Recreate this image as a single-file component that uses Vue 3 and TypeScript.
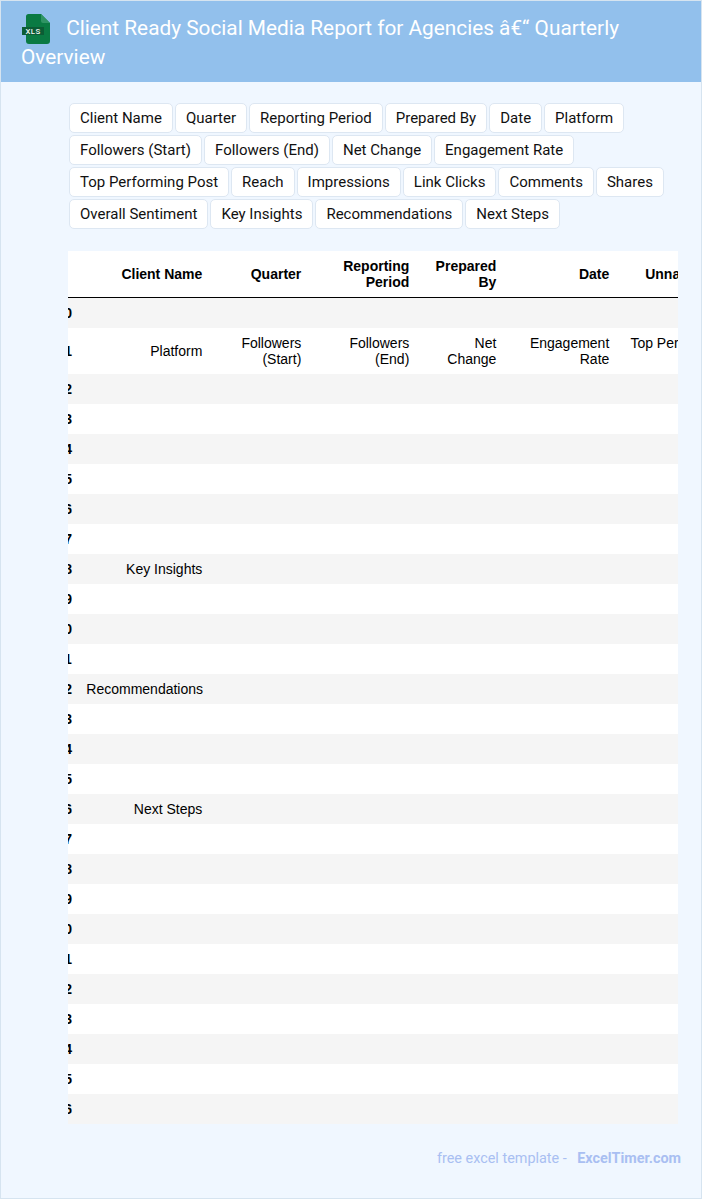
<script setup lang="ts">
const chips: string[] = [
  'Client Name', 'Quarter', 'Reporting Period', 'Prepared By', 'Date', 'Platform',
  'Followers (Start)', 'Followers (End)', 'Net Change', 'Engagement Rate',
  'Top Performing Post', 'Reach', 'Impressions', 'Link Clicks', 'Comments', 'Shares',
  'Overall Sentiment', 'Key Insights', 'Recommendations', 'Next Steps'
]
const headers: string[] = ['Client Name', 'Quarter', 'Reporting Period', 'Prepared By', 'Date', 'Unnamed: 6']
const filled: Record<number, string[]> = {
  1: ['Platform', 'Followers (Start)', 'Followers (End)', 'Net Change', 'Engagement Rate', 'Top Performing Post'],
  8: ['Key Insights'],
  12: ['Recommendations'],
  16: ['Next Steps']
}
const rows = Array.from({ length: 27 }, (_, i) => ({
  index: i,
  cells: headers.map((_h, c) => filled[i]?.[c] ?? '')
}))
</script>

<template>
  <div class="page">
    <header class="banner">
      <h1 class="title">
        <svg class="logo" width="29" height="30" viewBox="0 0 29 30" aria-hidden="true">
          <path d="M7.5 0H20L29 9V27a3 3 0 0 1-3 3H8a3 3 0 0 1-3-3V2.5A2.5 2.5 0 0 1 7.5 0Z" fill="#0a7a43" />
          <path d="M20 0L29 9H22a2 2 0 0 1-2-2Z" fill="#2f9464" />
          <rect x="1" y="13" width="22" height="8" fill="#0b5c35" />
          <text x="12" y="19.9" class="logo-text" text-anchor="middle">XLS</text>
        </svg>
        Client Ready Social Media Report for Agencies â€“ Quarterly Overview
      </h1>
    </header>

    <main class="content">
      <div class="chips">
        <span v-for="chip in chips" :key="chip" class="chip">{{ chip }}</span>
      </div>

      <div class="table-wrap">
        <table class="sheet">
          <colgroup>
            <col class="c-index" />
            <col class="c-client" />
            <col class="c-quarter" />
            <col class="c-period" />
            <col class="c-prepared" />
            <col class="c-date" />
            <col class="c-extra" />
          </colgroup>
          <thead>
            <tr>
              <th class="idx"></th>
              <th v-for="h in headers" :key="h">{{ h }}</th>
            </tr>
          </thead>
          <tbody>
            <tr v-for="row in rows" :key="row.index">
              <th class="idx">{{ row.index }}</th>
              <td v-for="(cell, c) in row.cells" :key="c">{{ cell }}</td>
            </tr>
          </tbody>
        </table>
      </div>

      <footer class="foot">
        <span>free excel template - </span>
        <strong class="brand">ExcelTimer.com</strong>
      </footer>
    </main>
  </div>
</template>

<style>
html, body { margin: 0; padding: 0; }
</style>

<style scoped>
.page {
  box-sizing: border-box;
  width: 702px;
  height: 1199px;
  border: 1px solid #d6e4f0;
  background: #f0f7ff;
  font-family: Roboto, sans-serif;
  overflow: hidden;
}
.banner {
  background: #92c0ec;
  height: 81px;
  box-sizing: border-box;
  padding: 13px 20px 0 20px;
}
.title {
  margin: 0;
  color: #fff;
  font-size: 20.8px;
  font-weight: 400;
  line-height: 28.6px;
}
.logo {
  display: inline-block;
  vertical-align: -1px;
  margin: -8px 11px -8px 0;
}
.logo-text {
  font-family: Roboto, sans-serif;
  font-size: 7.8px;
  font-weight: 500;
  letter-spacing: 0.4px;
  fill: #f2f7f4;
}
.content {
  padding: 21px 23px 0 67px;
}
.chips {
  display: flex;
  flex-wrap: wrap;
  gap: 2px;
  padding-left: 1px;
}
.chip {
  box-sizing: border-box;
  height: 30px;
  padding: 0 10px;
  line-height: 28px;
  font-size: 15px;
  color: #111;
  background: #fff;
  border: 1px solid #dde7f2;
  border-radius: 5px;
}
.table-wrap {
  margin-top: 22px;
  overflow: hidden;
  background: #fff;
}
.sheet {
  table-layout: fixed;
  width: 699px;
  margin-left: -31.7px;
  border-collapse: collapse;
  font-family: "Liberation Sans", sans-serif;
  font-size: 14px;
  line-height: 16px;
  color: #000;
}
.c-index { width: 40px; }
.c-client { width: 136px; }
.c-quarter { width: 99px; }
.c-period { width: 108px; }
.c-prepared { width: 87px; }
.c-date { width: 113px; }
.c-extra { width: 116px; }
th, td {
  padding: 7px 10px;
  text-align: right;
  vertical-align: middle;
  font-weight: 400;
}
th { font-weight: 700; }
th.idx { padding: 7px 4.4px 7px 0; }
thead tr { border-bottom: 1px solid #000; }
tbody tr:nth-child(odd) { background: #f5f5f5; }
tbody tr:nth-child(even) { background: #fff; }
.foot {
  margin-top: 25px;
  text-align: right;
  font-size: 14.4px;
  line-height: 20px;
  color: #a9bff2;
  margin-right: -3px;
}
.brand {
  margin-left: 7px;
  font-weight: 700;
}
</style>
